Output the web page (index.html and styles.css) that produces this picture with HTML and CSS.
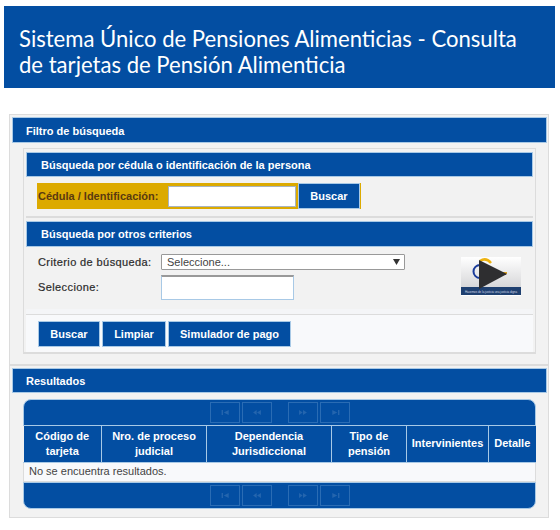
FILE: index.html
```html
<!DOCTYPE html>
<html lang="es">
<head>
<meta charset="utf-8">
<title>Consulta de tarjetas de Pensión Alimenticia</title>
<link rel="stylesheet" href="styles.css">
</head>
<body>
<header class="banner">
  <h1>Sistema Único de Pensiones Alimenticias - Consulta de tarjetas de Pensión Alimenticia</h1>
</header>

<main class="page">
  <section class="panel panel-filter">
    <h2 class="bar bar-main">Filtro de búsqueda</h2>
    <div class="inner">
      <h3 class="bar bar-sub">Búsqueda por cédula o identificación de la persona</h3>
      <div class="id-zone">
        <div class="id-row">
          <label class="id-label">Cédula / Identificación:</label>
          <input class="id-input" type="text">
          <button class="btn btn-id">Buscar</button>
        </div>
      </div>
      <h3 class="bar bar-sub bar-second">Búsqueda por otros criterios</h3>
      <div class="criteria">
        <div class="criteria-form">
          <div class="field field-select">
            <label class="field-label">Criterio de búsqueda:</label>
            <div class="select">
              <span>Seleccione...</span>
              <svg class="select-arrow" width="7" height="6" viewBox="0 0 7 6"><path d="M0 0h7L3.500 6z" fill="#333"/></svg>
            </div>
          </div>
          <div class="field field-input">
            <label class="field-label">Seleccione:</label>
            <input class="criteria-input" type="text">
          </div>
        </div>
        <svg class="thumb" width="60" height="39" viewBox="0 0 60 39">
          <defs>
            <linearGradient id="sky" x1="0" y1="0" x2="0" y2="1">
              <stop offset="0" stop-color="#ffffff"/>
              <stop offset="1" stop-color="#d6d6d8"/>
            </linearGradient>
          </defs>
          <rect width="60" height="39" fill="#fff"/>
          <rect width="60" height="31" fill="url(#sky)"/>
          <path d="M19 8a6.500 6.500 0 0 0 0 13" fill="none" stroke="#1b3c9a" stroke-width="2"/>
          <path d="M19 4Q25 0 30 6" fill="none" stroke="#eeb310" stroke-width="2.500"/>
          <rect x="42" y="15" width="4" height="2" fill="#d9a020"/>
          <rect x="42" y="17" width="3" height="1" fill="#b33"/>
          <rect y="30" width="60" height="8" fill="#1f4070"/>
          <text x="30" y="35.500" font-size="2.900" fill="#d5dbe6" text-anchor="middle" font-family="Liberation Sans">Hacemos de la justicia una justicia digna</text>
          <path d="M18 3L46 17 18 32z" fill="#2e2e30"/>
        </svg>
      </div>
      <div class="criteria-foot"></div>
      <div class="actions">
        <button class="btn btn-search">Buscar</button>
        <button class="btn btn-clear">Limpiar</button>
        <button class="btn btn-sim">Simulador de pago</button>
      </div>
    </div>
  </section>

  <section class="panel panel-results">
    <h2 class="bar bar-main bar-results">Resultados</h2>
    <div class="datatable">
      <div class="pager pager-top">
        <span class="page-btn"><svg width="9" height="5" viewBox="0 0 11 7"><path d="M0 0h2v7H0zM10 0v7L3 3.500z"/></svg></span>
        <span class="page-btn"><svg width="10" height="5" viewBox="0 0 11 7"><path d="M5 0v7L0 3.500zM11 0v7L5.500 3.500z"/></svg></span>
        <span class="page-gap"></span>
        <span class="page-btn"><svg width="10" height="5" viewBox="0 0 11 7"><path d="M0 0v7l5-3.500zM5.500 0v7L11 3.500z"/></svg></span>
        <span class="page-btn"><svg width="9" height="5" viewBox="0 0 11 7"><path d="M1 0v7l7-3.500zM9 0h2v7H9z"/></svg></span>
      </div>
      <table class="grid">
        <colgroup>
          <col class="c1"><col class="c2"><col class="c3"><col class="c4"><col class="c5"><col class="c6">
        </colgroup>
        <thead>
          <tr>
            <th>Código de tarjeta</th>
            <th>Nro. de proceso judicial</th>
            <th>Dependencia Jurisdiccional</th>
            <th>Tipo de pensión</th>
            <th>Intervinientes</th>
            <th>Detalle</th>
          </tr>
        </thead>
        <tbody>
          <tr><td colspan="6">No se encuentra resultados.</td></tr>
        </tbody>
      </table>
      <div class="pager pager-bottom">
        <span class="page-btn"><svg width="9" height="5" viewBox="0 0 11 7"><path d="M0 0h2v7H0zM10 0v7L3 3.500z"/></svg></span>
        <span class="page-btn"><svg width="10" height="5" viewBox="0 0 11 7"><path d="M5 0v7L0 3.500zM11 0v7L5.500 3.500z"/></svg></span>
        <span class="page-gap"></span>
        <span class="page-btn"><svg width="10" height="5" viewBox="0 0 11 7"><path d="M0 0v7l5-3.500zM5.500 0v7L11 3.500z"/></svg></span>
        <span class="page-btn"><svg width="9" height="5" viewBox="0 0 11 7"><path d="M1 0v7l7-3.500zM9 0h2v7H9z"/></svg></span>
      </div>
    </div>
  </section>
</main>
</body>
</html>
```

FILE: styles.css
```css
* { box-sizing: border-box; }

html, body {
  margin: 0;
  background: #fff;
}

body {
  width: 560px;
  height: 530px;
  overflow: hidden;
  font-family: "Liberation Sans", Arial, sans-serif;
  font-size: 11px;
  color: #333;
  padding-top: 6px;
}

.banner {
  width: 551px;
  height: 82px;
  margin-left: 4px;
  background: #034ea2;
  padding: 20px 15px 0;
}

.banner h1 {
  margin: 0;
  font-family: Lato, "Open Sans", sans-serif;
  font-weight: 400;
  font-size: 22.1px;
  line-height: 26px;
  color: #fff;
  font-variant-ligatures: common-ligatures;
}

.page {
  width: 540px;
  margin: 26px 0 0 9px;
}

.panel {
  background: #f2f2f2;
  border: 1px solid #dcdcdc;
  padding: 2px;
}

.panel-filter {
  height: 251px;
}

.panel-results {
  height: 153px;
}

.bar {
  margin: 0;
  background: #034ea2;
  border: 1px solid #a8c9e6;
  color: #fff;
  font-weight: 700;
  font-size: 11px;
}

.bar-main {
  height: 26px;
  line-height: 26px;
  padding-left: 13px;
  width: 535px;
}

.bar-results {
  height: 25px;
  line-height: 24px;
}

.inner {
  width: 513px;
  height: 206px;
  margin: 5px 0 0 11px;
  border: 1px solid #dcdcdc;
  border-bottom-width: 2px;
  padding: 3px 2px 0;
  background: #f2f2f2;
}

.bar-sub {
  height: 25px;
  line-height: 24px;
  padding-left: 14px;
  width: 507px;
}

.bar-second {
  height: 26px;
  line-height: 25px;
}

.id-zone {
  height: 41px;
  padding: 6px 0 0 11px;
  border-bottom: 2px solid #dcdcdc;
  margin-bottom: 3px;
}

.id-row {
  width: 324px;
  height: 26px;
  background: #dcaa00;
  display: flex;
  align-items: center;
  padding-left: 1px;
  border-right: 1px solid #dcaa00;
}

.id-label {
  width: 130px;
  font-weight: 700;
  color: #5a3a10;
  line-height: 13px;
  flex: none;
}

.id-input {
  width: 128px;
  height: 21px;
  margin: 0;
  border: 1px solid #a8b4c0;
  background: #fff;
  flex: none;
}

.btn {
  margin: 0;
  padding: 0;
  height: 26px;
  background: #034ea2;
  border: 1px solid #a8c9e6;
  color: #fff;
  font-family: "Liberation Sans", Arial, sans-serif;
  font-weight: 700;
  font-size: 11px;
  flex: none;
}

.btn-id {
  width: 62px;
  margin-left: 2px;
}

.criteria {
  height: 62px;
  display: flex;
  justify-content: space-between;
  padding: 7px 12px 0 11px;
}

.criteria-form {
  width: 368px;
}

.field {
  display: flex;
}

.field-label {
  width: 124px;
  flex: none;
  padding-left: 1px;
  color: #2b2b2b;
  line-height: 13px;
  letter-spacing: 0.4px;
  -webkit-text-stroke: 0.2px #2b2b2b;
}

.field-select {
  align-items: center;
  height: 16px;
}

.field-input {
  margin-top: 5px;
}

.field-input .field-label {
  padding-top: 6px;
}

.select {
  width: 244px;
  height: 16px;
  border: 1px solid #999;
  border-radius: 1px;
  background: #fff;
  color: #444;
  padding: 0 4px 0 5px;
  display: flex;
  align-items: center;
  justify-content: space-between;
  font-size: 11px;
}

.select-arrow {
  flex: none;
}

.criteria-input {
  width: 133px;
  height: 25px;
  margin: 0;
  border: 1px solid #a8c9e6;
  border-top: 2px solid #999;
  background: #fff;
  flex: none;
}

.thumb {
  flex: none;
  margin-top: 3px;
}

.criteria-foot {
  height: 5px;
  background: #f4f5f7;
}

.actions {
  height: 38px;
  background: #f8f9fb;
  border-top: 1px solid #dcdcdc;
  display: flex;
  gap: 2px;
  padding: 6px 0 0 12px;
}

.btn-search { width: 62px; }
.btn-clear { width: 64px; }
.btn-sim { width: 123px; }

.datatable {
  width: 513px;
  margin: 6px 0 0 11px;
}

.pager {
  height: 27px;
  background: #034ea2;
  border: 1px solid #a8c9e6;
  display: flex;
  align-items: center;
  padding-left: 186px;
  gap: 2px;
}

.pager-top {
  border-radius: 8px 8px 0 0;
}

.pager-bottom {
  border-radius: 0 0 8px 8px;
}

.page-btn {
  width: 30px;
  height: 21px;
  border: 1px solid #2a6cb4;
  display: flex;
  align-items: center;
  justify-content: center;
  flex: none;
}

.page-btn svg {
  fill: #2465ae;
}

.page-gap {
  width: 12px;
  flex: none;
}

.grid {
  width: 512px;
  border-collapse: collapse;
  table-layout: fixed;
}

.c1 { width: 78px; }
.c2 { width: 105px; }
.c3 { width: 125px; }
.c4 { width: 75px; }
.c5 { width: 82px; }
.c6 { width: 47px; }

.grid th {
  height: 36px;
  padding: 0 2px;
  background: #034ea2;
  color: #fff;
  font-size: 11px;
  font-weight: 700;
  line-height: 15px;
  border: 1px solid #a8c9e6;
  border-top: 0;
  text-align: center;
}

.grid th:first-child { border-left: 0; }
.grid th:last-child { border-right: 0; }

.grid td {
  height: 19px;
  padding: 0 5px 2px;
  background: #f8f9fb;
  border: 1px solid #dcdcdc;
  border-top: 0;
  color: #444;
  font-size: 11px;
}
```
